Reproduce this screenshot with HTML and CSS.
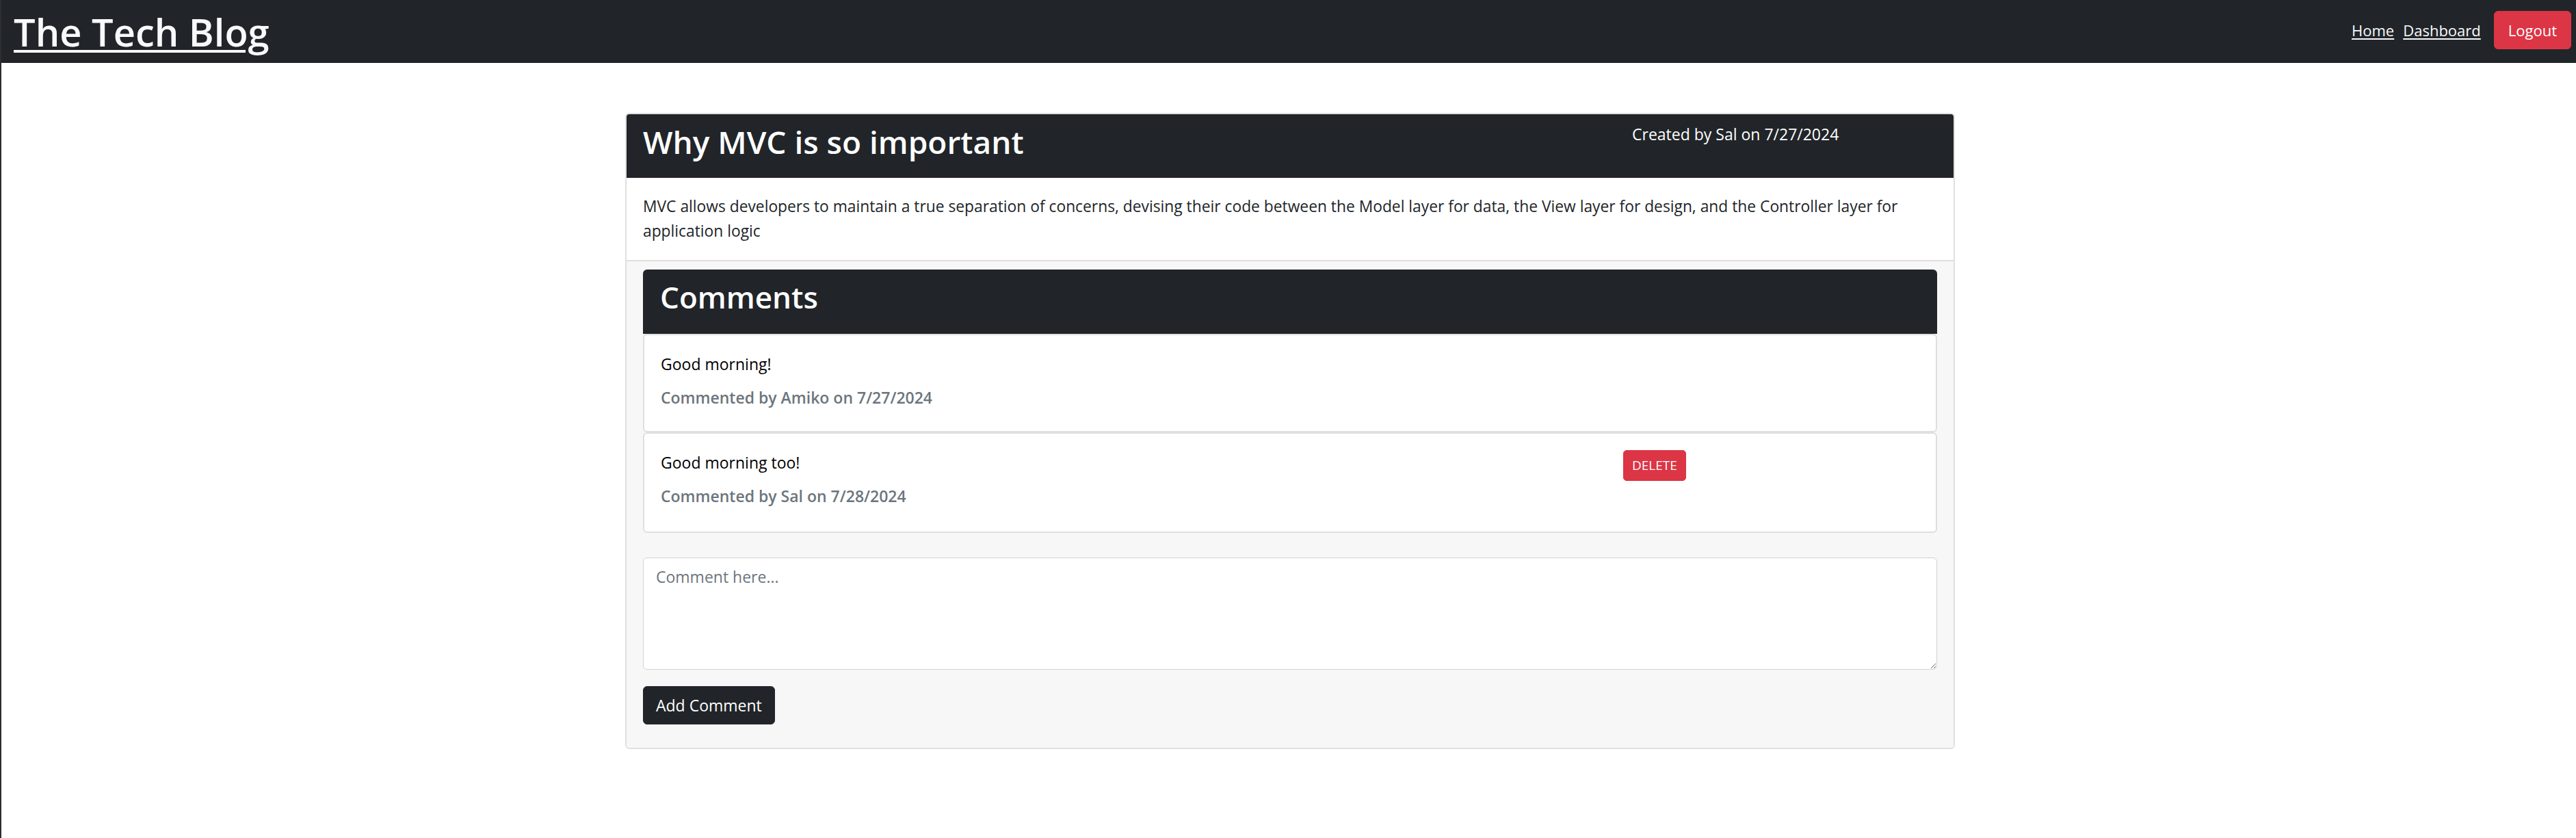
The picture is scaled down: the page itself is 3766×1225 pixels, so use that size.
FILE: index.html
```html
<!DOCTYPE html>
<html lang="en">
<head>
<meta charset="utf-8">
<title>The Tech Blog</title>
<link rel="stylesheet" href="styles.css">
</head>
<body>
<header class="navbar">
  <h1 class="brand"><a href="#">The Tech Blog</a></h1>
  <nav class="nav-right">
    <a class="nav-link" href="#">Home</a>
    <a class="nav-link" href="#">Dashboard</a>
    <button class="btn btn-danger btn-logout" type="button">Logout</button>
  </nav>
</header>
<main class="page">
  <article class="card post">
    <div class="card-header">
      <div class="row">
        <div class="col-9"><h2 class="post-title">Why MVC is so important</h2></div>
        <div class="col-3"><p class="post-meta">Created by Sal on 7/27/2024</p></div>
      </div>
    </div>
    <div class="card-body">
      <p class="post-text">MVC allows developers to maintain a true separation of concerns, devising their code between the Model layer for data, the View layer for design, and the Controller layer for application logic</p>
    </div>
    <div class="card-footer">
      <section class="comments">
        <div class="comments-header"><h2 class="comments-title">Comments</h2></div>
        <div class="comment">
          <div class="row">
            <div class="col-9">
              <p class="comment-text">Good morning!</p>
              <h6 class="comment-meta">Commented by Amiko on 7/27/2024</h6>
            </div>
            <div class="col-3"></div>
          </div>
        </div>
        <div class="comment">
          <div class="row">
            <div class="col-9">
              <p class="comment-text">Good morning too!</p>
              <h6 class="comment-meta">Commented by Sal on 7/28/2024</h6>
            </div>
            <div class="col-3"><button class="btn btn-danger btn-sm" type="button">DELETE</button></div>
          </div>
        </div>
      </section>
      <form class="comment-form">
        <textarea class="form-control" rows="4" placeholder="Comment here..."></textarea>
        <button class="btn btn-dark btn-add" type="button">Add Comment</button>
      </form>
    </div>
  </article>
</main>
</body>
</html>
```

FILE: styles.css
```css
* { box-sizing: border-box; }

html { background: #fff; }

body {
  margin: 0;
  min-height: 100vh;
  border-left: 2px solid #2e2e2e;
  font-family: "Open Sans", "Noto Sans", sans-serif;
  font-size: 23px;
  line-height: 36px;
  color: #212529;
  background: #fff;
}

/* ---------- navbar ---------- */
.navbar {
  height: 92px;
  background: #212529;
  display: flex;
  align-items: center;
  justify-content: space-between;
  padding: 0 7px 0 18px;
}

.brand {
  margin: 0;
  font-size: 56px;
  line-height: 70px;
  font-weight: 600;
}

.brand a {
  color: #f8f9fa;
  text-decoration: underline;
  text-decoration-thickness: 4px;
  text-underline-offset: 5px;
}

.nav-right {
  display: flex;
  align-items: baseline;
  margin-bottom: 4px;
}

.nav-link {
  color: #f8f9fa;
  font-size: 22px;
  text-decoration: underline;
  text-decoration-thickness: 2px;
  text-underline-offset: 3px;
  margin-right: 13px;
}

.nav-link + .nav-link { margin-right: 19px; }

/* ---------- buttons ---------- */
.btn {
  font-family: inherit;
  font-size: 22px;
  line-height: 36px;
  padding: 9px 20px;
  border: 1px solid transparent;
  border-radius: 6px;
  color: #fff;
  cursor: pointer;
}

.btn-danger { background: #dc3545; border-color: #dc3545; }
.btn-dark { background: #212529; border-color: #212529; }

.btn-sm {
  font-size: 19px;
  line-height: 31px;
  padding: 6px 12px;
  border-radius: 5px;
}

/* ---------- layout ---------- */
.page {
  padding: 73px 0 0 4px;
}

.card {
  width: 1944px;
  margin: 0 auto;
  border: 2px solid #e0e0e0;
  border-radius: 6px;
  background: #fff;
  overflow: hidden;
}

.row {
  display: flex;
  margin: 0 -18px;
}

.col-9 { flex: 0 0 75%; padding: 0 18px; }
.col-3 { flex: 0 0 25%; padding: 0 18px; }

/* ---------- post ---------- */
.card-header {
  background: #212529;
  color: #fff;
  padding: 11px 24px 12px;
}

.post-title {
  margin: 0 0 12px;
  font-size: 46px;
  line-height: 58px;
  font-weight: 600;
  color: #fff;
}

.post-meta {
  margin: 0;
  color: #fff;
}

.card-body {
  padding: 24px;
}

.post-text {
  margin: 0;
  font-size: 22.8px;
}

.card-footer {
  background: #f7f7f7;
  border-top: 2px solid #dfdfdf;
  padding: 12px 24px 12px;
}

/* ---------- comments ---------- */
.comments-header {
  background: #212529;
  border-radius: 6px 6px 0 0;
  padding: 12px 25px;
}

.comments-title {
  margin: 0 0 14px;
  font-size: 44px;
  line-height: 56px;
  font-weight: 600;
  color: #fff;
}

.comment {
  background: #fff;
  border: 2px solid #dfdfdf;
  border-radius: 6px;
  padding: 24px;
}

.comment:last-child { padding-bottom: 27px; }

.comment-text {
  margin: 0 0 17px;
  color: #000;
}

.comment-meta {
  margin: 0 0 10px;
  font-size: 23px;
  line-height: 29px;
  font-weight: 600;
  color: #6c757d;
}

/* ---------- form ---------- */
.comment-form {
  display: flex;
  flex-direction: column;
  align-items: flex-start;
  padding-top: 36px;
}

.form-control {
  display: block;
  width: 100%;
  height: 164px;
  font-family: inherit;
  font-size: 23px;
  line-height: 36px;
  padding: 9px 18px;
  color: #212529;
  background: #fff;
  border: 1px solid #ced4da;
  border-radius: 6px;
}

.form-control::placeholder { color: #6c757d; }

.btn-add {
  margin: 24px 0 22px;
  padding: 9px 18px;
  font-size: 23px;
}
```
